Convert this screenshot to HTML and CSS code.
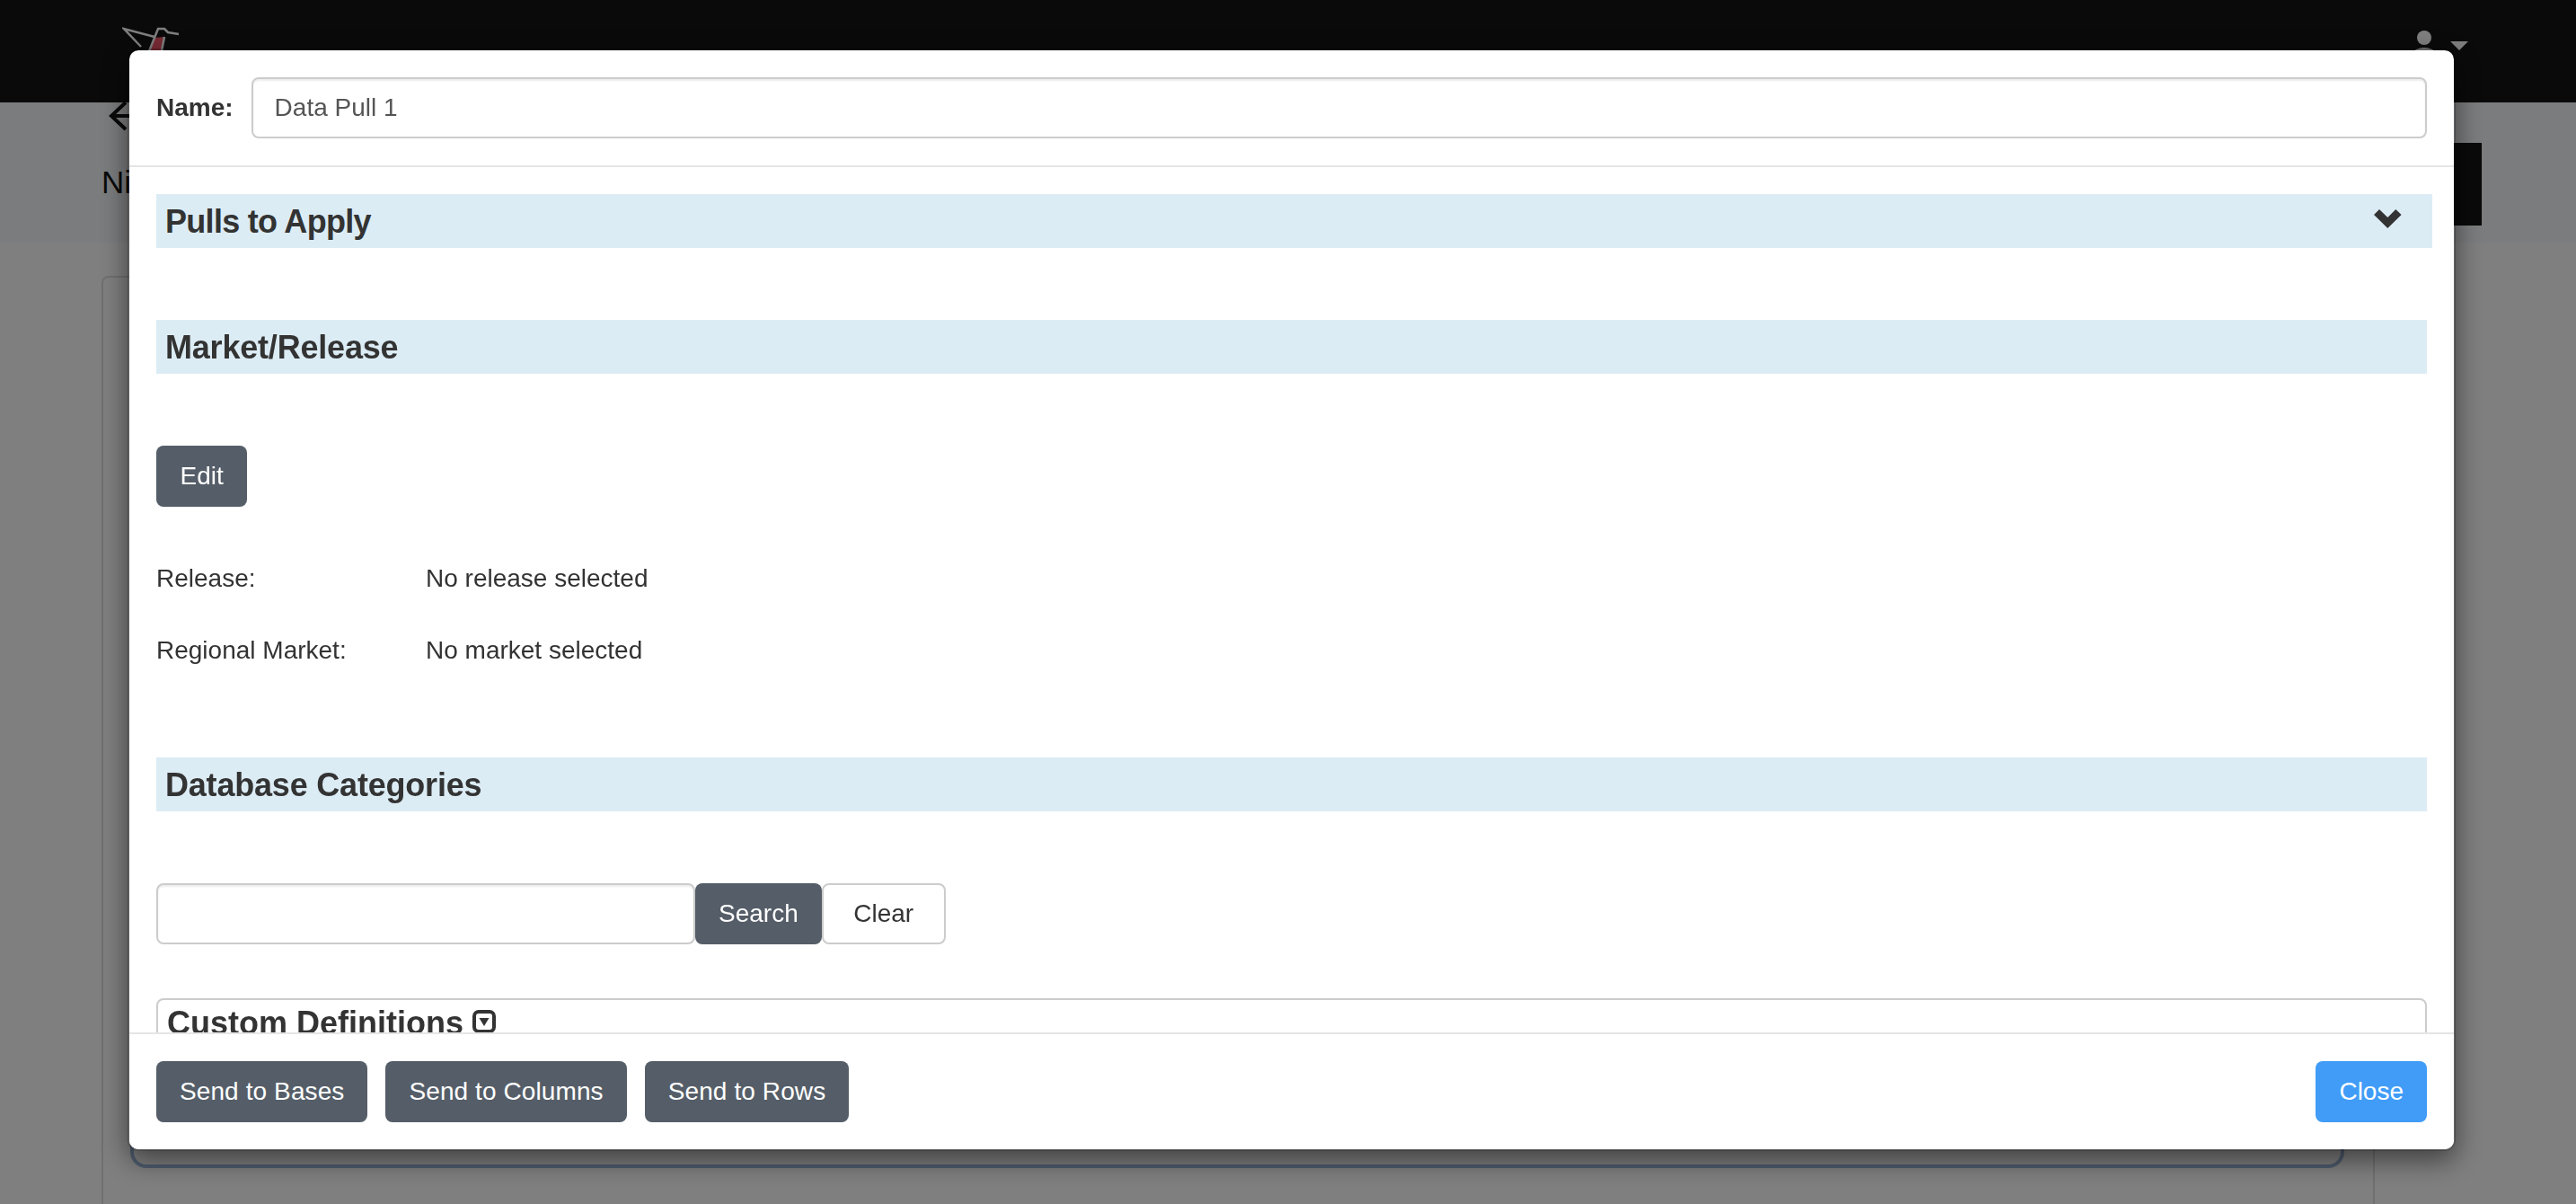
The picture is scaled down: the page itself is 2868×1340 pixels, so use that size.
FILE: index.html
```html
<!DOCTYPE html>
<html lang="en">
<head>
<meta charset="utf-8">
<title>Data Pull</title>
<link rel="stylesheet" href="styles.css">
</head>
<body>
<div class="page">
  <header class="topbar">
    <svg class="logo" width="70" height="50" viewBox="0 0 70 50">
      <polygon points="36,14 47,13 43,34 27,34" fill="#f4556a"/>
      <path d="M21 24 L2 4 L36 13 M28 34 L36 14 L40 4 L47 4 L51 8 L63 10 M47 13 L43 34" fill="none" stroke="#fff" stroke-width="2.500"/>
    </svg>
    <div class="usermenu">
      <svg class="usericon" width="34" height="40" viewBox="0 0 34 40">
        <circle cx="17" cy="10" r="8" fill="#fff"/>
        <path d="M1 36 C1 26 8 21 17 21 C26 21 33 26 33 36 Z" fill="#fff"/>
      </svg>
      <span class="caret"></span>
    </div>
  </header>
  <section class="subbar">
    <div class="subbar-left">
      <svg class="backarrow" width="40" height="36" viewBox="0 0 40 36">
        <path d="M20 3 L4 18 L20 33 M4 18 H40" fill="none" stroke="#141414" stroke-width="4"/>
      </svg>
      <h1 class="pagetitle">Nielsen</h1>
    </div>
    <div class="blackbtn"></div>
  </section>
  <main class="panel">
    <div class="bluebox"></div>
  </main>
</div>

<div class="overlay">
  <div class="modal">
    <div class="modal-header">
      <label class="name-label" for="pullname">Name:</label>
      <input class="textinput grow" id="pullname" type="text" value="Data Pull 1">
    </div>
    <div class="modal-body">
      <div class="bar bar-wide">
        <h2 class="bar-title bar-title-tight">Pulls to Apply</h2>
        <svg class="chevron" width="31" height="21" viewBox="0 0 31 21"><polygon points="0,6 6,0 15.300,9 24.300,0 30.600,6 15.300,21" fill="#333"/></svg>
      </div>
      <div class="bar bar-gap">
        <h2 class="bar-title">Market/Release</h2>
      </div>
      <button class="btn btn-dark btn-edit" type="button">Edit</button>
      <div class="info first">
        <span class="info-key">Release:</span><span>No release selected</span>
      </div>
      <div class="info">
        <span class="info-key">Regional Market:</span><span>No market selected</span>
      </div>
      <div class="bar bar-db">
        <h2 class="bar-title">Database Categories</h2>
      </div>
      <div class="searchrow">
        <input class="textinput searchinput" type="text" aria-label="Search">
        <button class="btn btn-dark" type="button">Search</button>
        <button class="btn btn-light" type="button">Clear</button>
      </div>
      <div class="defpanel">
        <h3 class="def-title">Custom Definitions
          <svg class="sqcaret" width="26" height="26" viewBox="0 0 26 26"><rect x="2" y="2" width="22" height="22" rx="5" fill="none" stroke="#333" stroke-width="4"/><polygon points="7.500,9 18.500,9 13,18" fill="#333"/></svg>
        </h3>
      </div>
    </div>
    <div class="modal-footer">
      <button class="btn btn-dark btn-send" type="button">Send to Bases</button>
      <button class="btn btn-dark btn-send" type="button">Send to Columns</button>
      <button class="btn btn-dark btn-send" type="button">Send to Rows</button>
      <button class="btn btn-blue" type="button">Close</button>
    </div>
  </div>
</div>
</body>
</html>
```
FILE: styles.css
```css
* { box-sizing: border-box; }
html, body { margin: 0; height: 100%; overflow: hidden; }
body {
  font-family: "Liberation Sans", Arial, sans-serif;
  font-size: 28px;
  line-height: 40px;
  color: #333;
  background: #fff;
}
.page { height: 1340px; overflow: hidden; }

.topbar {
  height: 114px;
  background: #141414;
  display: flex;
  justify-content: space-between;
  padding: 28px 120px 0 136px;
}
.logo { display: block; }
.usermenu { display: flex; align-items: flex-start; gap: 12px; margin-top: 4px; }
.usericon { display: block; }
.caret {
  width: 0; height: 0; margin-top: 14px;
  border-left: 10px solid transparent;
  border-right: 10px solid transparent;
  border-top: 10px solid #fff;
}

.subbar {
  height: 156px;
  background: #f6f8fa;
  display: flex;
  justify-content: space-between;
  padding: 0 105px 0 113px;
}
.backarrow { display: block; margin-left: 7px; margin-top: -3px; }
.pagetitle { margin: 34px 0 0; font-weight: 400; font-size: 35px; line-height: 44px; color: #141414; }
.blackbtn { width: 400px; height: 92px; margin-top: 45px; background: #141414; }

.panel {
  margin: 37px 0 0 113px;
  width: 2531px;
  height: 1200px;
  border: 2px solid #e0e0e0;
  border-radius: 8px;
  padding: 40px 30px 0;
}
.bluebox {
  width: 2465px;
  height: 951px;
  border: 4px solid #9ebadc;
  border-radius: 18px;
}

.overlay { position: fixed; inset: 0; background: rgba(0,0,0,.5); }
.modal {
  position: absolute;
  left: 142px;
  top: 54px;
  width: 2592px;
  height: 1227px;
  background: #fff;
  background-clip: padding-box;
  border: 2px solid rgba(0,0,0,.2);
  border-radius: 12px;
  box-shadow: 0 10px 30px rgba(0,0,0,.5);
  display: flex;
  flex-direction: column;
}
.modal-header {
  display: flex;
  align-items: center;
  gap: 20px;
  padding: 30px;
  border-bottom: 2px solid #e5e5e5;
}
.name-label { font-weight: 700; color: #333; }
.grow { flex: 1; }
.textinput {
  height: 68px;
  border: 2px solid #ccc;
  border-radius: 8px;
  padding: 0 24px;
  font: inherit;
  color: #555;
  background: #fff;
  box-shadow: inset 0 2px 2px rgba(0,0,0,.075);
}
.modal-body { flex: 1; min-height: 0; overflow: hidden; padding: 30px 30px 0; }
.bar {
  height: 60px;
  background: #dcecf5;
  display: flex;
  align-items: center;
  justify-content: space-between;
  padding: 0 10px;
}
.bar-wide { margin-right: -6px; padding-right: 34px; }
.bar-gap { margin-top: 80px; }
.bar-db { margin-top: 99px; }
.bar-title { margin: 0; font-size: 36px; line-height: 60px; padding-top: 2px; font-weight: 700; letter-spacing: -0.2px; color: #333; }
.bar-title-tight { letter-spacing: -0.7px; }
.chevron { display: block; margin-top: -6px; }
.btn {
  height: 68px;
  border: 0;
  border-radius: 8px;
  padding: 0 26px;
  font: inherit;
  display: inline-block;
}
.btn-dark { background: #555e68; color: #fff; }
.btn-send { letter-spacing: 0.1px; }
.btn-edit { display: block; margin-top: 80px; padding: 0 26.5px; }
.btn-light { background: #fff; color: #333; border: 2px solid #ccc; padding: 0 33.5px; }
.btn-blue { background: #409cf7; color: #fff; margin-left: auto; }
.info { display: flex; margin-top: 40px; }
.info.first { margin-top: 60px; }
.info-key { width: 300px; }
.searchrow { display: flex; margin-top: 80px; }
.searchinput { width: 600px; }
.defpanel {
  margin-top: 60px;
  height: 200px;
  border: 2px solid #ccc;
  border-radius: 8px;
  padding: 0 10px;
}
.def-title { margin: 0; font-size: 36px; line-height: 40px; font-weight: 700; color: #333; padding-top: 6px; }
.sqcaret { vertical-align: 1px; }
.modal-footer {
  display: flex;
  gap: 20px;
  padding: 30px;
  border-top: 2px solid #e5e5e5;
  background: #fff;
  border-radius: 0 0 10px 10px;
}
```
